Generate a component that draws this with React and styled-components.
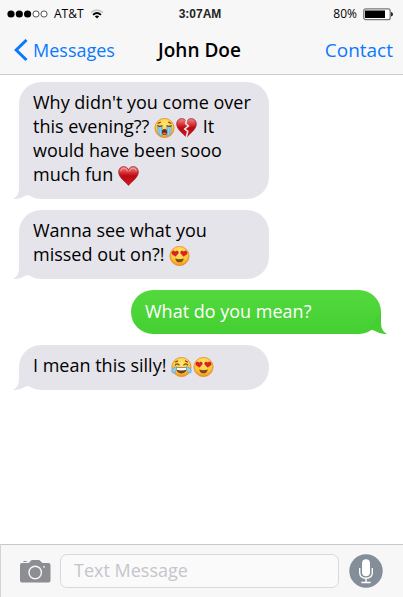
import React from "react";
import styled, { createGlobalStyle, css } from "styled-components";

const GlobalStyle = createGlobalStyle`
  *, *::before, *::after { box-sizing: border-box; }
  body {
    margin: 0;
    background: #fff;
    color: #000;
    font-family: "Open Sans", "Noto Sans", sans-serif;
  }
  svg { display: block; }
`;

const Phone = styled.div`
  display: flex;
  flex-direction: column;
  min-height: 100vh;
`;

const Header = styled.header`
  background: #f7f7f7;
  border-bottom: 1px solid #ccc;
`;

const StatusBar = styled.div`
  display: grid;
  grid-template-columns: 1fr auto 1fr;
  align-items: center;
  height: 28px;
  padding: 0 10px 0 7px;
  font-size: 12px;
  line-height: 16px;
`;

const StatusGroup = styled.div`
  display: flex;
  align-items: center;
  justify-content: ${(p) => (p.$end ? "flex-end" : "flex-start")};
  gap: 6px;
`;

const Clock = styled.time`
  font-family: "Liberation Sans", Arial, sans-serif;
  font-weight: 700;
  color: #222;
`;

const NavBar = styled.nav`
  display: grid;
  grid-template-columns: 1fr auto 1fr;
  align-items: center;
  height: 46px;
  padding: 0 10px 2px 6px;
  line-height: 24px;
`;

const NavLink = styled.a`
  display: flex;
  align-items: center;
  gap: 5px;
  color: #0b79ff;
  text-decoration: none;
  ${(p) =>
    p.$end
      ? css`
          justify-self: end;
          font-size: 19px;
        `
      : css`
          justify-self: start;
          padding-left: 8px;
          font-size: 18px;
        `}
`;

const Title = styled.h1`
  margin: 0;
  font-size: 19px;
  font-weight: 600;
  line-height: 24px;
`;

const Thread = styled.main`
  flex: 1;
  display: flex;
  flex-direction: column;
  gap: 11px;
  padding: 7px 22px 11px 19px;
`;

const Bubble = styled.div`
  position: relative;
  width: 250px;
  max-width: 85%;
  border-radius: 22px;
  font-size: 18px;
  line-height: 24px;
  ${(p) =>
    p.$sent
      ? css`
          align-self: flex-end;
          padding: 9px 14px 11px;
          color: #fff;
          font-weight: 500;
          background: linear-gradient(#53d93d, #45cf33);
        `
      : css`
          align-self: flex-start;
          padding: 8px 14px 13px;
          background: #e5e4ea;
        `}
`;

const Tail = styled.svg`
  position: absolute;
  bottom: 0;
  ${(p) => (p.$sent ? "right: -6px;" : "left: -6px;")}
`;

const EmojiSvg = styled.svg`
  display: inline-block;
  vertical-align: -5px;
  margin-right: 1px;
`;

const Composer = styled.form`
  display: flex;
  align-items: center;
  height: 53px;
  padding: 0 20px 0 19px;
  background: #f7f7f7;
  border-top: 1px solid #c8c8ca;
  border-left: 1px solid #d4d4d6;
`;

const IconButton = styled.button`
  flex: none;
  padding: 0;
  border: 0;
  background: none;
`;

const MessageInput = styled.input`
  flex: 1;
  min-width: 0;
  height: 34px;
  margin: 0 10px 0 9px;
  padding: 0 13px 2px;
  border: 1px solid #d9d9dd;
  border-radius: 7px;
  background: #fafafa;
  font: 18px/24px "Open Sans", "Noto Sans", sans-serif;
  outline: none;
  &::placeholder { color: #c5c5cc; opacity: 1; }
`;

function Signal() {
  return (
    <svg width="41" height="8" viewBox="0 0 41 8" role="img" aria-label="Signal 3 of 5">
      {[4, 12.3, 20.6].map((x) => (
        <circle key={x} cx={x} cy="4" r="3.6" />
      ))}
      {[29, 37].map((x) => (
        <circle key={x} cx={x} cy="4" r="3.1" fill="#fff" stroke="#444" strokeWidth="0.9" />
      ))}
    </svg>
  );
}

function Wifi() {
  return (
    <svg width="14" height="10" viewBox="0 0 14 10" fill="none" role="img" aria-label="Wi-Fi">
      <path d="M1 3.6Q7-1.4 13 3.6" stroke="#c3c3c3" strokeWidth="1.6" />
      <path d="M3 5.8Q7 2.2 11 5.8" stroke="#000" strokeWidth="1.8" />
      <path d="M4.8 7.3Q7 5.6 9.2 7.3L7 9.6Z" fill="#000" />
    </svg>
  );
}

function Battery() {
  return (
    <svg width="30" height="13" viewBox="0 0 30 13" role="img" aria-label="Battery">
      <rect x="0.8" y="0.8" width="26.4" height="10.9" rx="2" fill="#fff" stroke="#777" strokeWidth="1.3" />
      <rect x="2" y="2.5" width="20" height="7.5" />
      <path d="M28 4Q30 4.5 30 6.3Q30 8 28 8.5Z" fill="#222" />
    </svg>
  );
}

function FaceBase() {
  return (
    <>
      <defs>
        <radialGradient id="face" cx="50%" cy="32%" r="68%">
          <stop offset="0" stopColor="#ffe873" />
          <stop offset="0.65" stopColor="#ffc936" />
          <stop offset="1" stopColor="#ee9023" />
        </radialGradient>
      </defs>
      <circle cx="10" cy="10" r="9.6" fill="url(#face)" stroke="#df8b2d" strokeWidth="0.8" />
    </>
  );
}

const heartShape = "M10 19.4C7 15.6.2 11.7.2 6C.2 2.8 2.4.6 5.2.6C7.6.6 9.2 2 10 3.8C10.8 2 12.4.6 14.8.6C17.6.6 19.8 2.8 19.8 6C19.8 11.7 13 15.6 10 19.4Z";

function HeartFill() {
  return (
    <defs>
      <linearGradient id="heart" x1="0" y1="0" x2="0" y2="1">
        <stop offset="0" stopColor="#f08a8c" />
        <stop offset="0.35" stopColor="#d4282e" />
        <stop offset="0.5" stopColor="#b90a14" />
        <stop offset="1" stopColor="#d8161d" />
      </linearGradient>
    </defs>
  );
}

const emojiArt = {
  crying: (
    <>
      <FaceBase />
      <path d="M2.8 8.3H8V18.2Q4.8 17.5 3.2 15ZM12 8.3H17.2L16.8 15Q15.2 17.5 12 18.2Z" fill="#65ade5" />
      <path d="M4.5 9V15.6M6.2 9V17M13.8 9V17M15.5 9V15.6" stroke="#b4ddf8" strokeWidth="0.8" />
      <path d="M2.8 7.5Q5.5 9.2 8 7.5M12 7.5Q14.5 9.2 17.2 7.5M3.2 5.5L6.3 4M16.8 5.5L13.7 4" fill="none" stroke="#70401b" strokeWidth="1.1" />
      <ellipse cx="10" cy="14" rx="2.6" ry="3.1" fill="#653014" />
      <path d="M8 15.2Q10 13.7 12 15.2Q10 18 8 15.2" fill="#e46c59" />
    </>
  ),
  joy: (
    <>
      <FaceBase />
      <path d="M4.3 10.3H15.7Q14.8 16.5 10 16.5Q5.2 16.5 4.3 10.3Z" fill="#71401c" />
      <path d="M4.8 10.7H15.2L14.7 12.8Q10 14.2 5.3 12.8Z" fill="#fff" />
      <path d="M3.5 8.3Q5.8 5.5 8 8.3M12 8.3Q14.2 5.5 16.5 8.3M3.6 5.2L6.5 3.8M16.4 5.2L13.5 3.8" fill="none" stroke="#70401b" strokeWidth="1.1" />
      <path d="M5.3 9.7Q.7 10.5.2 14Q.4 16.6 2.6 16Q5 14.4 5.3 9.7ZM14.7 9.7Q19.3 10.5 19.8 14Q19.6 16.6 17.4 16Q15 14.4 14.7 9.7Z" fill="#91d0f4" stroke="#4599d2" strokeWidth="0.6" />
    </>
  ),
  love: (
    <>
      <FaceBase />
      <path d="M5.9 10.3L2.6 8.1Q1.6 5.3 3.8 4.9Q5.1 4.8 5.7 6.1Q6.6 4.5 8.1 5.1Q9.5 6 8.4 7.8ZM14.1 10.3L17.4 8.1Q18.4 5.3 16.2 4.9Q14.9 4.8 14.3 6.1Q13.4 4.5 11.9 5.1Q10.5 6 11.6 7.8Z" fill="#e31d24" stroke="#b61c1b" strokeWidth="0.5" />
      <path d="M5.6 12.4Q10 14 14.4 12.4Q13.3 16.3 10 16.3Q6.7 16.3 5.6 12.4Z" fill="#7e4918" />
    </>
  ),
  heart: (
    <>
      <HeartFill />
      <path d={heartShape} fill="url(#heart)" stroke="#8f1820" strokeWidth="0.7" />
      <path d="M2 5.2Q3 2 5.6 2.1Q8 2.3 9.2 5.4M10.8 5.4Q12 2.2 14.4 2.1Q17 2 18 5.2" fill="none" stroke="#f6b0ae" strokeWidth="0.8" />
    </>
  ),
  broken: (
    <>
      <HeartFill />
      <path d={heartShape} fill="url(#heart)" stroke="#8f1820" strokeWidth="0.7" />
      <path d="M10.3 1.4L9.2 5.5L11.9 8L8.3 11L11.3 13.4L9.5 20" fill="none" stroke="#eee8ed" strokeWidth="1.6" />
    </>
  ),
};

const emojiNames = {
  crying: "loudly crying face",
  joy: "face with tears of joy",
  love: "smiling face with heart eyes",
  heart: "red heart",
  broken: "broken heart",
};

function Emoji({ name }) {
  return (
    <EmojiSvg width="21" height="20" viewBox="-0.5 0 21 20" role="img" aria-label={emojiNames[name]}>
      {emojiArt[name]}
    </EmojiSvg>
  );
}

function Message({ sent, children }) {
  return (
    <Bubble $sent={sent}>
      <Tail $sent={sent} width="22" height="22" viewBox="0 0 22 22" aria-hidden="true">
        {sent ? (
          <path d="M16 0V11Q16 19 22 22Q16 22.5 9 18.5L4 17Z" fill="#45cf33" />
        ) : (
          <path d="M6 0V11Q6 19 0 22Q6 22.5 13 18.5L18 17Z" fill="#e5e4ea" />
        )}
      </Tail>
      {children}
    </Bubble>
  );
}

function Camera() {
  return (
    <svg width="31" height="23" viewBox="0 0 31 23" aria-hidden="true">
      <path d="M3.2 1.9Q3.2 1 4.1 1H6Q7 1 7 1.9Z" fill="#8d8d94" />
      <path d="M2 3H7.5Q9 3 9.8 2L10.5 1Q11.2 0 12.5 0H18.5Q19.8 0 20.5 1L21.2 2Q22 3 23.5 3H28.5Q30.5 3 30.5 5V20.5Q30.5 22.5 28.5 22.5H2Q0 22.5 0 20.5V5Q0 3 2 3Z" fill="#8d8d94" />
      <circle cx="15.2" cy="12.5" r="6.2" fill="none" stroke="#f7f7f7" strokeWidth="1.4" />
      <circle cx="24" cy="6.8" r="0.9" fill="#f7f7f7" />
    </svg>
  );
}

function Microphone() {
  return (
    <svg width="34" height="34" viewBox="0 0 34 34" aria-hidden="true">
      <circle cx="17" cy="17" r="16.7" fill="#848e99" />
      <rect x="13" y="5.3" width="8" height="17" rx="4" fill="#fff" />
      <path d="M10.7 14V18.5Q10.7 24.3 17 24.3Q23.3 24.3 23.3 18.5V14M17 24.3V28.3M12.3 28.5H21.7" fill="none" stroke="#fff" strokeWidth="1.4" />
    </svg>
  );
}

export default function App() {
  return (
    <Phone>
      <GlobalStyle />
      <Header>
        <StatusBar>
          <StatusGroup>
            <Signal />
            <span>AT&amp;T</span>
            <Wifi />
          </StatusGroup>
          <Clock>3:07AM</Clock>
          <StatusGroup $end>
            <span>80%</span>
            <Battery />
          </StatusGroup>
        </StatusBar>
        <NavBar>
          <NavLink href="#messages">
            <svg width="14" height="22" viewBox="0 0 14 22" aria-hidden="true">
              <path d="M12.5 1L2.2 11L12.5 21" fill="none" stroke="#0b79ff" strokeWidth="3" />
            </svg>
            Messages
          </NavLink>
          <Title>John Doe</Title>
          <NavLink href="#contact" $end>Contact</NavLink>
        </NavBar>
      </Header>
      <Thread>
        <Message>
          Why didn't you come over this evening?? <Emoji name="crying" />
          <Emoji name="broken" /> It would have been sooo much fun <Emoji name="heart" />
        </Message>
        <Message>
          Wanna see what you missed out on?! <Emoji name="love" />
        </Message>
        <Message sent>What do you mean?</Message>
        <Message>
          I mean this silly! <Emoji name="joy" />
          <Emoji name="love" />
        </Message>
      </Thread>
      <Composer>
        <IconButton type="button" aria-label="Take photo">
          <Camera />
        </IconButton>
        <MessageInput type="text" aria-label="Text Message" placeholder="Text Message" />
        <IconButton type="button" aria-label="Record audio">
          <Microphone />
        </IconButton>
      </Composer>
    </Phone>
  );
}
